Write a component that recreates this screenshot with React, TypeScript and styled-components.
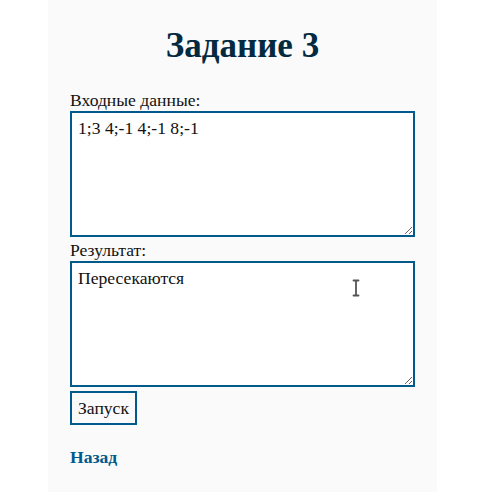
import React from 'react';
import styled, { createGlobalStyle } from 'styled-components';

const GlobalStyle = createGlobalStyle`
  html, body {
    margin: 0;
    padding: 0;
    background: #ffffff;
    font-family: "Liberation Serif", "Times New Roman", serif;
  }
`;

export default function App() {
  return (
    <>
      <GlobalStyle />
      <Page>
        <Panel>
          <Title>Задание 3</Title>
          <Label htmlFor="input">Входные данные:</Label>
          <Field id="input" defaultValue="1;3 4;-1 4;-1 8;-1" />
          <Label htmlFor="result">Результат:</Label>
          <FieldWrap>
            <Field id="result" readOnly defaultValue="Пересекаются" />
            <Caret viewBox="0 0 8 18" aria-hidden="true">
              <path
                d="M1 1.5h6M1 16.5h6M4 1.5v15"
                stroke="#ffffff"
                strokeWidth="3.4"
                fill="none"
                strokeLinecap="round"
              />
              <path
                d="M1.5 1.5h5M1.5 16.5h5M4 1.5v15"
                stroke="#555555"
                strokeWidth="1.8"
                fill="none"
                strokeLinecap="round"
              />
            </Caret>
          </FieldWrap>
          <RunButton type="button">Запуск</RunButton>
          <BackLink href="#">Назад</BackLink>
        </Panel>
      </Page>
    </>
  );
}

const Page = styled.div`
  padding-left: 48px;
`;

const Panel = styled.main`
  width: 389px;
  box-sizing: border-box;
  background: #fafafa;
  padding: 26px 22px 24px;
  display: flex;
  flex-direction: column;
  align-items: flex-start;
`;

const Title = styled.h1`
  align-self: stretch;
  margin: 0 0 24px;
  text-align: center;
  font-size: 35px;
  line-height: 40px;
  font-weight: 700;
  color: #032a40;
`;

const Label = styled.label`
  display: block;
  font-size: 17.6px;
  line-height: 21px;
  color: #111111;
`;

const FieldWrap = styled.div`
  position: relative;
`;

const Field = styled.textarea`
  display: block;
  width: 345px;
  height: 126px;
  box-sizing: border-box;
  margin: 0 0 3px;
  padding: 5px 6px;
  border: 2px solid #005a8c;
  border-radius: 0;
  background: #ffffff;
  font-family: "Liberation Serif", "Times New Roman", serif;
  font-size: 17.6px;
  line-height: 21px;
  color: #111111;
  outline: none;
`;

const Caret = styled.svg`
  position: absolute;
  left: 282px;
  top: 18px;
  width: 8px;
  height: 18px;
`;

const RunButton = styled.button`
  margin-top: 1px;
  padding: 5px 6px;
  border: 2px solid #005a8c;
  border-radius: 0;
  background: transparent;
  font-family: "Liberation Serif", "Times New Roman", serif;
  font-size: 17.6px;
  line-height: 20px;
  color: #111111;
`;

const BackLink = styled.a`
  margin-top: 22px;
  font-size: 17.6px;
  line-height: 21px;
  font-weight: 700;
  color: #005a8c;
  text-decoration: none;
`;
